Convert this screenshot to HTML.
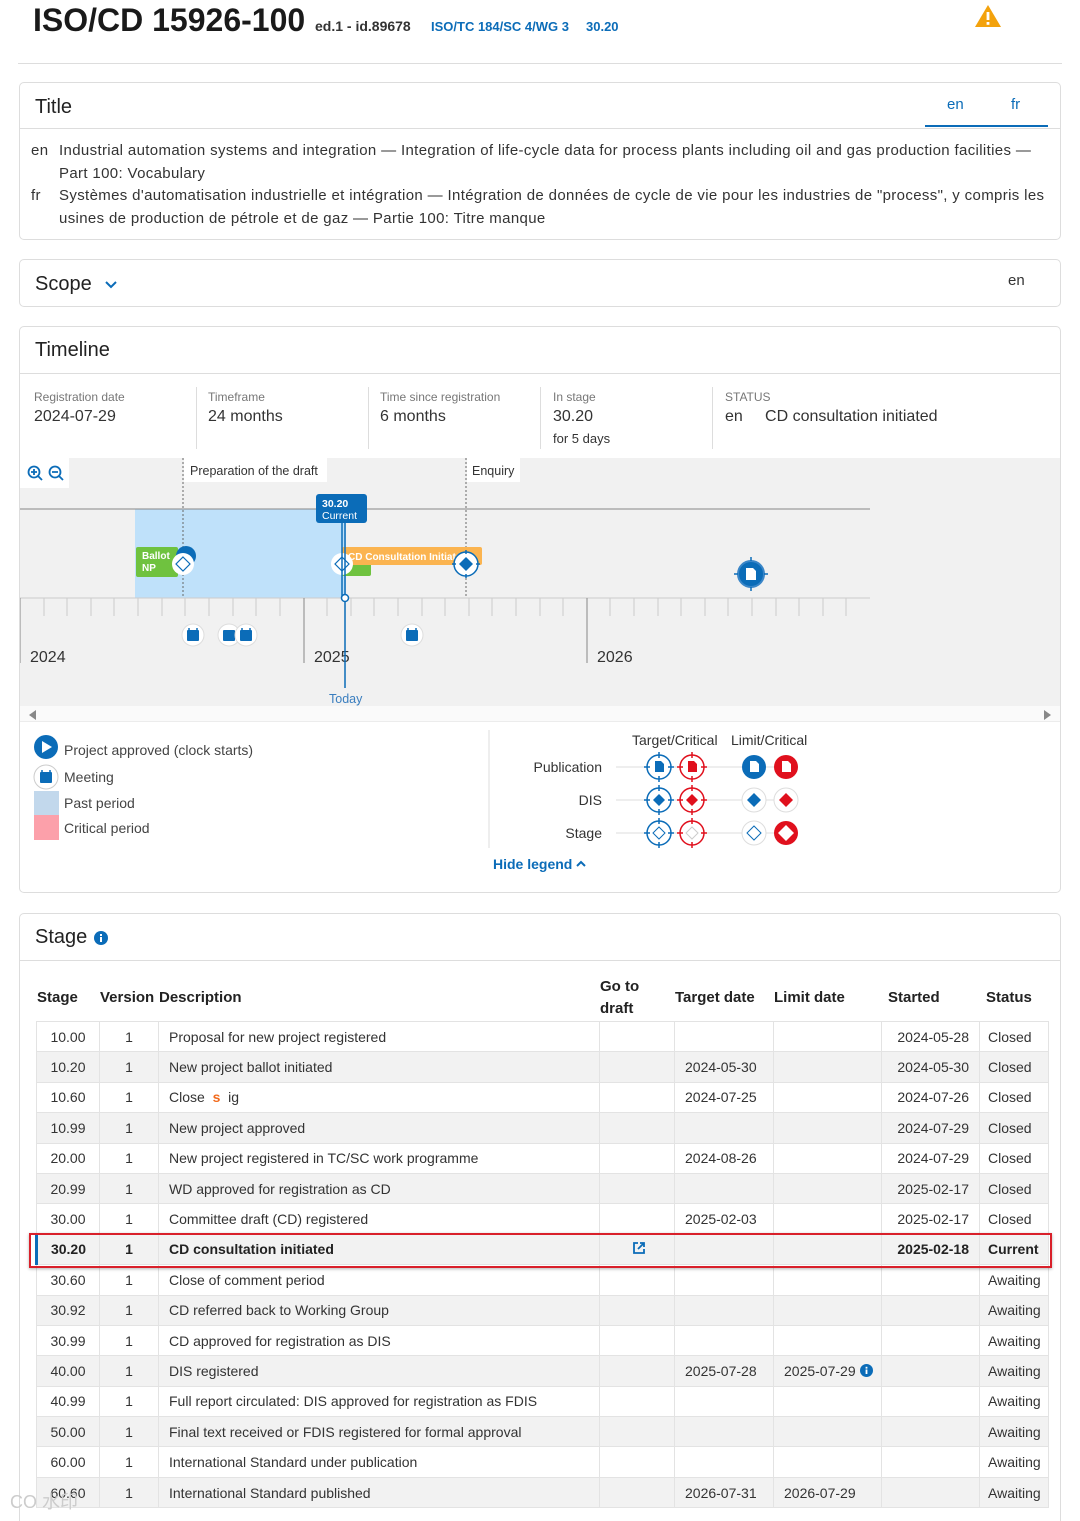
<!DOCTYPE html>
<html><head><meta charset="utf-8">
<style>
*{box-sizing:border-box;margin:0;padding:0}
html,body{width:1080px;height:1521px;overflow:hidden}
body{position:relative;background:#fff;font-family:"Liberation Sans",Arial,sans-serif;color:#333}
.a{position:absolute}
.card{position:absolute;left:19px;width:1042px;border:1px solid #ddd;border-radius:5px;background:#fff}
.h{font-size:20px;color:#222}
.lbl{font-size:12px;color:#777}
.val{font-size:16px;color:#333}
.blue{color:#0b6cb8}
table{border-collapse:collapse;font-size:14px;color:#333}
td{height:30.4px;border:1px solid #e3e3e3;padding:0 10px;white-space:nowrap}
tr:nth-child(even) td{background:#f2f2f2}
th{font-weight:bold;font-size:15px;color:#222;text-align:left;height:45px;padding:0 2px}
.tt{font-size:15px;line-height:22.5px;color:#333;letter-spacing:0.35px}
</style></head><body>

<div class="a" style="left:33px;top:2px;font-size:32px;font-weight:bold;color:#1a1a1a">ISO/CD 15926-100</div>
<div class="a" style="left:315px;top:18px;font-size:14px;font-weight:bold;color:#333">ed.1 - id.89678</div>
<div class="a blue" style="left:431px;top:19px;font-size:13px;font-weight:bold">ISO/TC 184/SC 4/WG 3</div>
<div class="a blue" style="left:586px;top:19px;font-size:13px;font-weight:bold">30.20</div>
<svg class="a" style="left:974px;top:4px" width="28" height="24" viewBox="0 0 28 24"><path d="M14 1 L27 23 L1 23 Z" fill="#f3a20c"/><rect x="12.6" y="8" width="2.8" height="8" fill="#fff"/><rect x="12.6" y="18" width="2.8" height="2.8" fill="#fff"/></svg>
<div class="a" style="left:18px;top:63px;width:1044px;height:1px;background:#ddd"></div>

<!-- Title -->
<div class="card" style="top:82px;height:158px">
  <div class="a h" style="left:15px;top:13px">Title</div>
  <div class="a" style="left:905px;top:12px;width:123px;height:32px;border-bottom:2px solid #0b6cb8"></div>
  <div class="a blue" style="left:927px;top:13px;font-size:15px">en</div>
  <div class="a blue" style="left:991px;top:13px;font-size:15px">fr</div>
  <div class="a" style="left:0;top:45px;width:1040px;height:1px;background:#ddd"></div>
  <div class="a tt" style="left:11px;top:57px">en</div>
  <div class="a tt" style="left:39px;top:57px;width:1000px">Industrial automation systems and integration — Integration of life-cycle data for process plants including oil and gas production facilities — Part 100: Vocabulary</div>
  <div class="a tt" style="left:11px;top:102px">fr</div>
  <div class="a tt" style="left:39px;top:102px;width:1000px">Systèmes d'automatisation industrielle et intégration — Intégration de données de cycle de vie pour les industries de "process", y compris les usines de production de pétrole et de gaz — Partie 100: Titre manque</div>
</div>

<!-- Scope -->
<div class="card" style="top:259px;height:48px">
  <div class="a h" style="left:15px;top:13px">Scope</div>
  <svg class="a" style="left:84px;top:20px" width="14" height="10"><path d="M2 2 L7 7 L12 2" stroke="#0b6cb8" stroke-width="2" fill="none"/></svg>
  <div class="a" style="left:988px;top:12px;font-size:15px">en</div>
</div>

<!-- Timeline -->
<div class="card" style="top:326px;height:567px;overflow:hidden">
  <div class="a h" style="left:15px;top:12px">Timeline</div>
  <div class="a" style="left:0;top:46px;width:1040px;height:1px;background:#ddd"></div>
  <div class="a lbl" style="left:14px;top:63px">Registration date</div><div class="a val" style="left:14px;top:81px">2024-07-29</div>
  <div class="a" style="left:176px;top:60px;width:1px;height:62px;background:#ddd"></div>
  <div class="a lbl" style="left:188px;top:63px">Timeframe</div><div class="a val" style="left:188px;top:81px">24 months</div>
  <div class="a" style="left:348px;top:60px;width:1px;height:62px;background:#ddd"></div>
  <div class="a lbl" style="left:360px;top:63px">Time since registration</div><div class="a val" style="left:360px;top:81px">6 months</div>
  <div class="a" style="left:520px;top:60px;width:1px;height:62px;background:#ddd"></div>
  <div class="a lbl" style="left:533px;top:63px">In stage</div><div class="a val" style="left:533px;top:81px">30.20</div><div class="a" style="left:533px;top:104px;font-size:13px">for 5 days</div>
  <div class="a" style="left:692px;top:60px;width:1px;height:62px;background:#ddd"></div>
  <div class="a lbl" style="left:705px;top:63px">STATUS</div><div class="a val" style="left:705px;top:81px">en&nbsp;&nbsp;&nbsp;&nbsp;&nbsp;CD consultation initiated</div>
</div>

<svg class="a" style="left:20px;top:458px" width="1040" height="264" viewBox="20 458 1040 264" font-family="Liberation Sans,Arial,sans-serif">
  <rect x="20" y="458" width="1040" height="248" fill="#f1f1f1"/>
  <rect x="20" y="706" width="1040" height="16" fill="#fafafa"/>
  <path d="M29 715 L36 710 L36 720Z" fill="#888"/><path d="M1051 715 L1044 710 L1044 720Z" fill="#888"/>
  <rect x="20" y="458" width="49" height="30" fill="#fff"/>
  <g stroke="#0b6cb8" stroke-width="1.8" fill="none"><circle cx="34" cy="472" r="5.5"/><path d="M38 476 L42 480 M31 472 h6 M34 469 v6"/><circle cx="55" cy="472" r="5.5"/><path d="M59 476 L63 480 M52 472 h6"/></g>
  <rect x="135" y="509" width="211" height="89" fill="#bfe1fa"/>
  <line x1="20" y1="509" x2="870" y2="509" stroke="#888" stroke-width="1"/>
  <line x1="20" y1="598" x2="870" y2="598" stroke="#ccc" stroke-width="1"/>
  <g stroke="#ccc" stroke-width="1">
   <line x1="44" y1="598" x2="44" y2="616"/><line x1="67" y1="598" x2="67" y2="616"/><line x1="91" y1="598" x2="91" y2="616"/><line x1="114" y1="598" x2="114" y2="616"/><line x1="138" y1="598" x2="138" y2="616"/><line x1="162" y1="598" x2="162" y2="616"/><line x1="185" y1="598" x2="185" y2="616"/><line x1="209" y1="598" x2="209" y2="616"/><line x1="233" y1="598" x2="233" y2="616"/><line x1="256" y1="598" x2="256" y2="616"/><line x1="280" y1="598" x2="280" y2="616"/>
   <line x1="327" y1="598" x2="327" y2="616"/><line x1="351" y1="598" x2="351" y2="616"/><line x1="374" y1="598" x2="374" y2="616"/><line x1="398" y1="598" x2="398" y2="616"/><line x1="422" y1="598" x2="422" y2="616"/><line x1="445" y1="598" x2="445" y2="616"/><line x1="469" y1="598" x2="469" y2="616"/><line x1="492" y1="598" x2="492" y2="616"/><line x1="516" y1="598" x2="516" y2="616"/><line x1="540" y1="598" x2="540" y2="616"/><line x1="563" y1="598" x2="563" y2="616"/>
   <line x1="610" y1="598" x2="610" y2="616"/><line x1="634" y1="598" x2="634" y2="616"/><line x1="658" y1="598" x2="658" y2="616"/><line x1="681" y1="598" x2="681" y2="616"/><line x1="705" y1="598" x2="705" y2="616"/><line x1="728" y1="598" x2="728" y2="616"/><line x1="752" y1="598" x2="752" y2="616"/><line x1="776" y1="598" x2="776" y2="616"/><line x1="799" y1="598" x2="799" y2="616"/><line x1="823" y1="598" x2="823" y2="616"/><line x1="846" y1="598" x2="846" y2="616"/>
  </g>
  <g stroke="#888"><line x1="20" y1="598" x2="20" y2="663"/><line x1="304" y1="598" x2="304" y2="663"/><line x1="587" y1="598" x2="587" y2="663"/></g>
  <g font-size="16" fill="#333"><text x="30" y="662">2024</text><text x="314" y="662">2025</text><text x="597" y="662">2026</text></g>
  <g stroke="#666" stroke-dasharray="2,2"><line x1="183" y1="458" x2="183" y2="598"/><line x1="466" y1="458" x2="466" y2="598"/></g>
  <rect x="184" y="458" width="143" height="24" fill="#fff"/><text x="190" y="475" font-size="12.5" fill="#333">Preparation of the draft</text>
  <rect x="467" y="458" width="53" height="24" fill="#fff"/><text x="472" y="475" font-size="12.5" fill="#333">Enquiry</text>
  <rect x="136" y="547" width="42" height="30" rx="2" fill="#6fc23f"/>
  <text x="142" y="559" font-size="10" font-weight="bold" fill="#fff">Ballot</text><text x="142" y="571" font-size="10" font-weight="bold" fill="#fff">NP</text>
  <circle cx="186" cy="556" r="10" fill="#0b6cb8"/>
  <circle cx="183" cy="564" r="11" fill="#fff"/><path d="M183 557 L190 564 L183 571 L176 564Z" fill="none" stroke="#0b6cb8" stroke-width="1.2"/>
  <rect x="342" y="556" width="29" height="20" rx="2" fill="#6fc23f"/>
  <rect x="342" y="547" width="140" height="18" rx="2" fill="#fbb450"/>
  <text x="348" y="560" font-size="10" font-weight="bold" fill="#fff">CD Consultation Initiated</text>
  <circle cx="342" cy="564" r="11" fill="#fff"/><path d="M342 557 L349 564 L342 571 L335 564Z" fill="none" stroke="#0b6cb8" stroke-width="1.2"/>
  <circle cx="466" cy="564" r="12" fill="#fff" stroke="#0b6cb8" stroke-width="1.5"/><path d="M466 557 L473 564 L466 571 L459 564Z" fill="#0b6cb8"/>
  <path d="M452 564h4M476 564h4M466 550v4M466 574v4" stroke="#0b6cb8" stroke-width="1.5"/>
  <line x1="345" y1="520" x2="345" y2="688" stroke="#0b6cb8" stroke-width="1.5"/>
  <line x1="342" y1="520" x2="342" y2="598" stroke="#0b6cb8" stroke-width="1.5"/>
  <circle cx="345" cy="598" r="3.5" fill="#fff" stroke="#0b6cb8" stroke-width="1.5"/>
  <rect x="316" y="494" width="51" height="29" rx="3" fill="#0b6cb8"/>
  <text x="322" y="507" font-size="10.5" font-weight="bold" fill="#fff">30.20</text><text x="322" y="519" font-size="10.5" fill="#fff">Current</text>
  <text x="329" y="703" font-size="12.5" fill="#3a7ebf">Today</text>
  <circle cx="751" cy="574" r="13" fill="#0b6cb8" stroke="#3a86c8" stroke-width="2"/>
  <path d="M751 557v4M751 587v4M734 574h4M764 574h4" stroke="#0b6cb8" stroke-width="1.5"/>
  <path d="M746 568h7l3 3v9h-10z" fill="#fff"/>
  <g>
   <circle cx="193" cy="635" r="11" fill="#fff" stroke="#ddd"/><rect x="187" y="630" width="12" height="11" rx="1" fill="#0b6cb8"/><path d="M189 628v3M197 628v3" stroke="#0b6cb8" stroke-width="1.5"/>
   <circle cx="229" cy="635" r="11" fill="#fff" stroke="#ddd"/><rect x="223" y="630" width="12" height="11" rx="1" fill="#0b6cb8"/>
   <circle cx="246" cy="635" r="11" fill="#fff" stroke="#ddd"/><rect x="240" y="630" width="12" height="11" rx="1" fill="#0b6cb8"/><path d="M242 628v3M250 628v3" stroke="#0b6cb8" stroke-width="1.5"/>
   <circle cx="412" cy="635" r="11" fill="#fff" stroke="#ddd"/><rect x="406" y="630" width="12" height="11" rx="1" fill="#0b6cb8"/><path d="M408 628v3M416 628v3" stroke="#0b6cb8" stroke-width="1.5"/>
  </g>
  <line x1="20" y1="722" x2="1060" y2="722" stroke="#ddd"/>
</svg>

<!-- legend -->
<svg class="a" style="left:20px;top:723px" width="1040" height="160" viewBox="20 723 1040 160" font-family="Liberation Sans,Arial,sans-serif">
  <circle cx="46" cy="747" r="12" fill="#0b6cb8"/><path d="M42 741 L52 747 L42 753Z" fill="#fff"/>
  <text x="64" y="755" font-size="14" fill="#444">Project approved (clock starts)</text>
  <circle cx="46" cy="777" r="12" fill="#fff" stroke="#ccc"/><rect x="40" y="772" width="12" height="11" rx="1" fill="#0b6cb8"/><path d="M42 770v3M50 770v3" stroke="#0b6cb8" stroke-width="1.5"/>
  <text x="64" y="782" font-size="14" fill="#444">Meeting</text>
  <rect x="34" y="791" width="25" height="24" fill="#c2d8ec"/><text x="64" y="808" font-size="14" fill="#444">Past period</text>
  <rect x="34" y="815" width="25" height="25" fill="#fca0aa"/><text x="64" y="833" font-size="14" fill="#444">Critical period</text>
  <line x1="489" y1="730" x2="489" y2="848" stroke="#ddd"/>
  <text x="632" y="745" font-size="14" fill="#333">Target/Critical</text><text x="731" y="745" font-size="14" fill="#333">Limit/Critical</text>
  <g font-size="14" fill="#333" text-anchor="end"><text x="602" y="772">Publication</text><text x="602" y="805">DIS</text><text x="602" y="838">Stage</text></g>
  <g stroke="#ddd"><line x1="616" y1="767" x2="790" y2="767"/><line x1="616" y1="800" x2="790" y2="800"/><line x1="616" y1="833" x2="790" y2="833"/></g>
  <g stroke-width="1.5" fill="#fff">
   <g stroke="#0b6cb8"><circle cx="659" cy="767" r="12"/><circle cx="659" cy="800" r="12"/><circle cx="659" cy="833" r="12"/><path d="M659 752v6M659 776v6M644 767h6M668 767h6M659 785v6M659 809v6M644 800h6M668 800h6M659 818v6M659 842v6M644 833h6M668 833h6"/></g>
   <g stroke="#e0101d"><circle cx="692" cy="767" r="12"/><circle cx="692" cy="800" r="12"/><circle cx="692" cy="833" r="12"/><path d="M692 752v6M692 776v6M677 767h6M701 767h6M692 785v6M692 809v6M677 800h6M701 800h6M692 818v6M692 842v6M677 833h6M701 833h6"/></g>
  </g>
  <path d="M655 761h6l3 3v8h-9z" fill="#0b6cb8"/><path d="M688 761h6l3 3v8h-9z" fill="#e0101d"/>
  <path d="M659 794l6 6-6 6-6-6z" fill="#0b6cb8"/><path d="M692 794l6 6-6 6-6-6z" fill="#e0101d"/>
  <path d="M659 827l6 6-6 6-6-6z" fill="none" stroke="#0b6cb8"/><path d="M692 827l6 6-6 6-6-6z" fill="none" stroke="#ccc"/>
  <circle cx="754" cy="767" r="12" fill="#0b6cb8"/><path d="M750 761h6l3 3v8h-9z" fill="#fff"/>
  <circle cx="786" cy="767" r="12" fill="#e0101d"/><path d="M782 761h6l3 3v8h-9z" fill="#fff"/>
  <circle cx="754" cy="800" r="12" fill="#fff" stroke="#ddd"/><path d="M754 793l7 7-7 7-7-7z" fill="#0b6cb8"/>
  <circle cx="786" cy="800" r="12" fill="#fff" stroke="#ddd"/><path d="M786 793l7 7-7 7-7-7z" fill="#e0101d"/>
  <circle cx="754" cy="833" r="12" fill="#fff" stroke="#ddd"/><path d="M754 826l7 7-7 7-7-7z" fill="none" stroke="#0b6cb8"/>
  <circle cx="786" cy="833" r="12" fill="#e0101d"/><path d="M786 825l8 8-8 8-8-8z" fill="#fff"/>
  <text x="493" y="869" font-size="14" font-weight="bold" fill="#0b6cb8">Hide legend</text>
  <path d="M577 866l4-4 4 4" stroke="#0b6cb8" stroke-width="2" fill="none"/>
</svg>

<!-- Stage -->
<div class="card" style="top:913px;height:620px;border-bottom:none;border-radius:5px 5px 0 0">
  <div class="a h" style="left:15px;top:12px">Stage</div>
  <svg class="a" style="left:74px;top:17px" width="14" height="14"><circle cx="7" cy="7" r="7" fill="#0b6cb8"/><rect x="6" y="6" width="2" height="5" fill="#fff"/><rect x="6" y="3" width="2" height="2" fill="#fff"/></svg>
  <div class="a" style="left:0;top:46px;width:1040px;height:1px;background:#ddd"></div>
</div>

<table class="a" style="left:35px;top:975px;width:1012px;table-layout:fixed">
<colgroup><col style="width:63px"><col style="width:59px"><col style="width:441px"><col style="width:75px"><col style="width:99px"><col style="width:108px"><col style="width:98px"><col style="width:69px"></colgroup>
<tr style="background:#fff"><th>Stage</th><th>Version</th><th>Description</th><th style="line-height:22px">Go to<br>draft</th><th>Target date</th><th>Limit date</th><th style="padding-left:8px">Started</th><th style="padding-left:8px">Status</th></tr>
</table>
<table class="a" style="left:35px;top:1021px;width:1012px;table-layout:fixed">
<colgroup><col style="width:63px"><col style="width:59px"><col style="width:441px"><col style="width:75px"><col style="width:99px"><col style="width:108px"><col style="width:98px"><col style="width:69px"></colgroup>
<tbody>
<tr><td style="text-align:center">10.00</td><td style="text-align:center">1</td><td>Proposal for new project registered</td><td></td><td></td><td></td><td style="text-align:right">2024-05-28</td><td style="padding:0 8px">Closed</td></tr>
<tr><td style="text-align:center">10.20</td><td style="text-align:center">1</td><td>New project ballot initiated</td><td></td><td>2024-05-30</td><td></td><td style="text-align:right">2024-05-30</td><td style="padding:0 8px">Closed</td></tr>
<tr><td style="text-align:center">10.60</td><td style="text-align:center">1</td><td>Close <span style="color:#f26b1d;font-weight:bold">&nbsp;s&nbsp;</span> ig</td><td></td><td>2024-07-25</td><td></td><td style="text-align:right">2024-07-26</td><td style="padding:0 8px">Closed</td></tr>
<tr><td style="text-align:center">10.99</td><td style="text-align:center">1</td><td>New project approved</td><td></td><td></td><td></td><td style="text-align:right">2024-07-29</td><td style="padding:0 8px">Closed</td></tr>
<tr><td style="text-align:center">20.00</td><td style="text-align:center">1</td><td>New project registered in TC/SC work programme</td><td></td><td>2024-08-26</td><td></td><td style="text-align:right">2024-07-29</td><td style="padding:0 8px">Closed</td></tr>
<tr><td style="text-align:center">20.99</td><td style="text-align:center">1</td><td>WD approved for registration as CD</td><td></td><td></td><td></td><td style="text-align:right">2025-02-17</td><td style="padding:0 8px">Closed</td></tr>
<tr><td style="text-align:center">30.00</td><td style="text-align:center">1</td><td>Committee draft (CD) registered</td><td></td><td>2025-02-03</td><td></td><td style="text-align:right">2025-02-17</td><td style="padding:0 8px">Closed</td></tr>
<tr style="font-weight:bold;color:#222"><td style="text-align:center;border-left:3px solid #0b6cb8">30.20</td><td style="text-align:center">1</td><td>CD consultation initiated</td><td style="text-align:right;padding-right:28px"><svg width="14" height="14"><path d="M6 2H2v10h10V8M8 2h4v4M12 2L6 8" stroke="#0b6cb8" stroke-width="1.8" fill="none"/></svg></td><td></td><td></td><td style="text-align:right">2025-02-18</td><td style="padding:0 8px">Current</td></tr>
<tr><td style="text-align:center">30.60</td><td style="text-align:center">1</td><td>Close of comment period</td><td></td><td></td><td></td><td></td><td style="padding:0 8px">Awaiting</td></tr>
<tr><td style="text-align:center">30.92</td><td style="text-align:center">1</td><td>CD referred back to Working Group</td><td></td><td></td><td></td><td></td><td style="padding:0 8px">Awaiting</td></tr>
<tr><td style="text-align:center">30.99</td><td style="text-align:center">1</td><td>CD approved for registration as DIS</td><td></td><td></td><td></td><td></td><td style="padding:0 8px">Awaiting</td></tr>
<tr><td style="text-align:center">40.00</td><td style="text-align:center">1</td><td>DIS registered</td><td></td><td>2025-07-28</td><td>2025-07-29 <svg width="13" height="13" style="vertical-align:-1px"><circle cx="6.5" cy="6.5" r="6.5" fill="#0b6cb8"/><rect x="5.6" y="5.5" width="1.8" height="4.5" fill="#fff"/><rect x="5.6" y="2.8" width="1.8" height="1.8" fill="#fff"/></svg></td><td></td><td style="padding:0 8px">Awaiting</td></tr>
<tr><td style="text-align:center">40.99</td><td style="text-align:center">1</td><td>Full report circulated: DIS approved for registration as FDIS</td><td></td><td></td><td></td><td></td><td style="padding:0 8px">Awaiting</td></tr>
<tr><td style="text-align:center">50.00</td><td style="text-align:center">1</td><td>Final text received or FDIS registered for formal approval</td><td></td><td></td><td></td><td></td><td style="padding:0 8px">Awaiting</td></tr>
<tr><td style="text-align:center">60.00</td><td style="text-align:center">1</td><td>International Standard under publication</td><td></td><td></td><td></td><td></td><td style="padding:0 8px">Awaiting</td></tr>
<tr><td style="text-align:center">60.60</td><td style="text-align:center">1</td><td>International Standard published</td><td></td><td>2026-07-31</td><td>2026-07-29</td><td></td><td style="padding:0 8px">Awaiting</td></tr>
</tbody></table>
<div class="a" style="left:29px;top:1233px;width:1023px;height:35px;border:2px solid #d9202a;box-shadow:0 1px 3px rgba(0,0,0,.3)"></div>
<div class="a" style="left:10px;top:1488px;font-size:18px;color:#ccc;font-family:'Liberation Sans','Noto Sans CJK SC',sans-serif">CO 水印</div>
</body></html>
